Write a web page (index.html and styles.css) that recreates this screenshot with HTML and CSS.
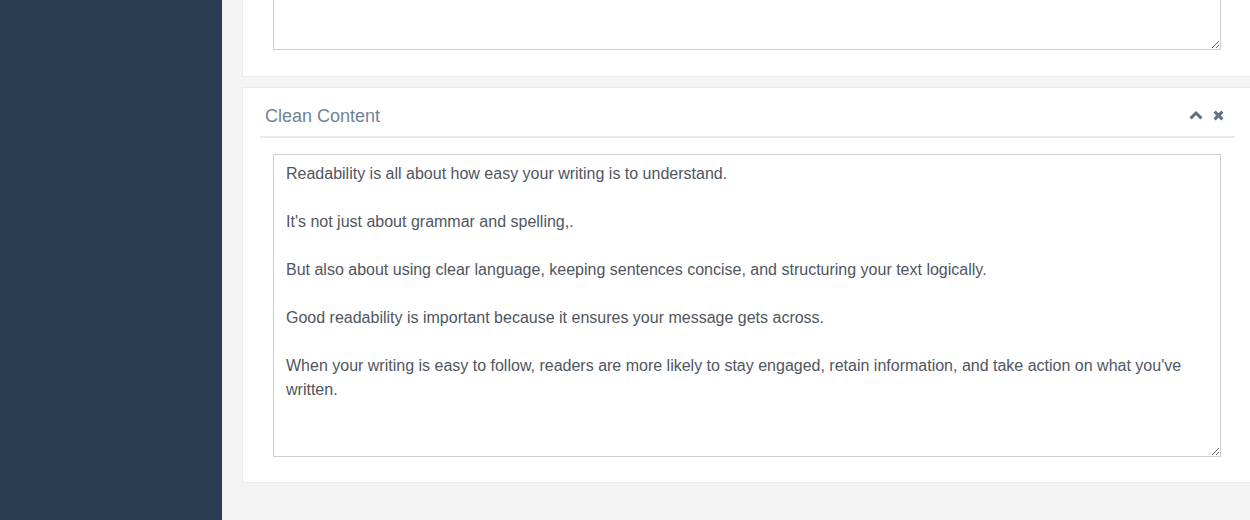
FILE: index.html
```html
<!DOCTYPE html>
<html lang="en">
<head>
<meta charset="utf-8">
<title>Clean Content</title>
<link rel="stylesheet" href="styles.css">
</head>
<body>
<div class="layout">
  <aside class="sidebar"></aside>
  <main class="main">
    <section class="panel panel-clipped">
      <div class="panel-body panel-body-top">
        <textarea class="field field-short"></textarea>
      </div>
    </section>
    <section class="panel">
      <header class="panel-head">
        <h2 class="panel-title">Clean Content</h2>
        <div class="panel-tools">
          <svg class="tool" width="14" height="10" viewBox="0 0 14 10" aria-hidden="true"><path d="M1.6 8.4 L7 3 L12.4 8.4" fill="none" stroke="currentColor" stroke-width="3"/></svg>
          <svg class="tool" width="11" height="11" viewBox="0 0 11 11" aria-hidden="true"><path d="M1.6 1.6 L9.4 9.4 M9.4 1.6 L1.6 9.4" fill="none" stroke="currentColor" stroke-width="3"/></svg>
        </div>
      </header>
      <div class="panel-body">
        <textarea class="field field-tall">Readability is all about how easy your writing is to understand.

It's not just about grammar and spelling,.

But also about using clear language, keeping sentences concise, and structuring your text logically.

Good readability is important because it ensures your message gets across.

When your writing is easy to follow, readers are more likely to stay engaged, retain information, and take action on what you've written.</textarea>
      </div>
    </section>
  </main>
</div>
</body>
</html>
```
FILE: styles.css
```css
* { box-sizing: border-box; }
html, body {
  margin: 0;
  height: 520px;
  overflow: hidden;
  font-family: "Liberation Sans", Arial, sans-serif;
}
.layout {
  display: flex;
  height: 520px;
}
.sidebar {
  width: 222px;
  flex: 0 0 222px;
  background: #2b3d52;
}
.main {
  flex: 1;
  background: #f4f4f4;
  padding-left: 20px;
  overflow: hidden;
}
.panel {
  background: #fff;
  border: 1px solid #e9ebed;
  margin-right: -2px;
}
.panel-clipped {
  margin-top: -136px;
  border-top: none;
  margin-bottom: 10px;
}
.panel-body {
  padding: 16px 30px 25px 30px;
}
.panel-body-top {
  padding-bottom: 26px;
}
.field {
  display: block;
  width: 100%;
  border: 1px solid #cfcfcf;
  border-radius: 0;
  padding: 7px 12px 6px;
  font-family: "Liberation Sans", Arial, sans-serif;
  font-size: 16px;
  line-height: 24px;
  color: #4f5661;
  background: #fff;
  outline: none;
  resize: vertical;
}
.field-short { height: 170px; }
.field-tall { height: 303px; }
.panel-head {
  display: flex;
  align-items: center;
  justify-content: space-between;
  margin: 0 16px 0 17px;
  height: 50px;
  padding: 6px 11px 0 5px;
  border-bottom: 2px solid #e6e8ea;
}
.panel-title {
  margin: 0;
  font-size: 18px;
  font-weight: normal;
  color: #6f8396;
  position: relative;
  top: 1px;
}
.panel-tools {
  display: flex;
  align-items: center;
  gap: 10px;
  color: #5d7084;
}
.tool { display: block; }
```
